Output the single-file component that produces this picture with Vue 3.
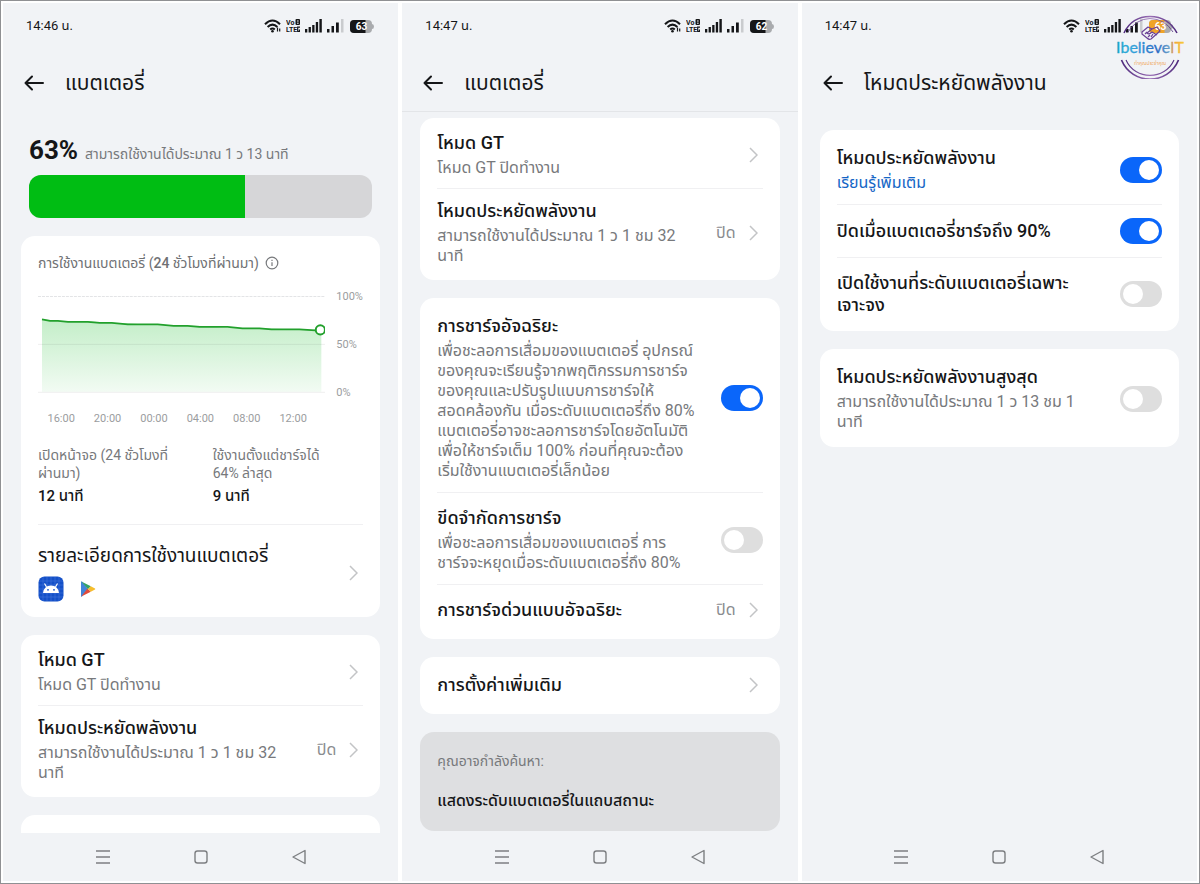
<script setup>
const navItems = ['เมนูล่าสุด', 'หน้าหลัก', 'ย้อนกลับ']

const modeRows = [
  { type: 'link', title: 'โหมด GT', sub: 'โหมด GT ปิดทำงาน' },
  {
    type: 'link',
    title: 'โหมดประหยัดพลังงาน',
    sub: 'สามารถใช้งานได้ประมาณ 1 ว 1 ชม 32\nนาที',
    value: 'ปิด'
  }
]

const phones = [
  {
    id: 'usage',
    time: '14:46 น.',
    level: 63,
    title: 'แบตเตอรี่',
    usage: true,
    cards: [modeRows],
    peek: true
  },
  {
    id: 'battery',
    time: '14:47 น.',
    level: 62,
    title: 'แบตเตอรี่',
    scrolled: true,
    cards: [
      modeRows,
      [
        {
          type: 'switch',
          on: true,
          title: 'การชาร์จอัจฉริยะ',
          sub: 'เพื่อชะลอการเสื่อมของแบตเตอรี่ อุปกรณ์\nของคุณจะเรียนรู้จากพฤติกรรมการชาร์จ\nของคุณและปรับรูปแบบการชาร์จให้\nสอดคล้องกัน เมื่อระดับแบตเตอรี่ถึง 80%\nแบตเตอรี่อาจชะลอการชาร์จโดยอัตโนมัติ\nเพื่อให้ชาร์จเต็ม 100% ก่อนที่คุณจะต้อง\nเริ่มใช้งานแบตเตอรี่เล็กน้อย'
        },
        {
          type: 'switch',
          on: false,
          title: 'ขีดจำกัดการชาร์จ',
          sub: 'เพื่อชะลอการเสื่อมของแบตเตอรี่ การ\nชาร์จจะหยุดเมื่อระดับแบตเตอรี่ถึง 80%'
        },
        { type: 'link', title: 'การชาร์จด่วนแบบอัจฉริยะ', value: 'ปิด' }
      ],
      [{ type: 'link', title: 'การตั้งค่าเพิ่มเติม' }]
    ],
    suggestion: true
  },
  {
    id: 'saver',
    time: '14:47 น.',
    level: 63,
    saver: true,
    title: 'โหมดประหยัดพลังงาน',
    cards: [
      [
        { type: 'switch', on: true, title: 'โหมดประหยัดพลังงาน', link: 'เรียนรู้เพิ่มเติม' },
        { type: 'switch', on: true, title: 'ปิดเมื่อแบตเตอรี่ชาร์จถึง 90%' },
        { type: 'switch', on: false, tall: true, title: 'เปิดใช้งานที่ระดับแบตเตอรี่เฉพาะ\nเจาะจง' }
      ],
      [
        {
          type: 'switch',
          on: false,
          title: 'โหมดประหยัดพลังงานสูงสุด',
          sub: 'สามารถใช้งานได้ประมาณ 1 ว 13 ชม 1\nนาที'
        }
      ]
    ]
  }
]

const hours = ['16:00', '20:00', '00:00', '04:00', '08:00', '12:00']
const batteryPercent = 63
</script>

<template>
  <main class="board">
    <section v-for="phone in phones" :key="phone.id" class="phone">
      <div class="status">
        <span class="time">{{ phone.time }}</span>
        <div class="signals">
          <svg class="wifi" width="17" height="14" viewBox="0 0 17 14" fill="none" stroke="#151618" stroke-width="2">
            <path d="M1 5.200Q8.500 -2.200 16 5.200" />
            <path d="M3.600 8Q8.500 3.200 13.400 8" />
            <path d="M6.200 10.500Q8.500 8.500 10.800 10.500" />
            <circle cx="8.500" cy="12.300" r="1.300" fill="#151618" stroke="none" />
            <path v-if="!phone.saver" d="M13.500 8.500v4M15.700 9.500v3" stroke-width="1.200" />
          </svg>
          <svg class="volte" width="14" height="14" viewBox="0 0 14 14">
            <text x="0" y="6">Vo</text>
            <text x="0" y="13">LTE</text>
            <rect x="9.500" y="0" width="4.500" height="6" rx="1" fill="#151618" />
            <path d="M11 2H12.700M11 4.200H12.700" stroke="#f1f3f6" stroke-width="1" />
            <path d="M14 8.200h-2.300v4.200h1.800v-2" fill="none" stroke="#151618" stroke-width="1.200" />
          </svg>
          <svg width="17" height="14" viewBox="0 0 17 14" fill="#151618">
            <rect y="10" width="2.300" height="3.500" /><rect x="3.600" y="8" width="2.300" height="5.500" />
            <rect x="7.200" y="6" width="2.300" height="7.500" /><rect x="10.800" y="3" width="2.300" height="10.500" />
            <rect x="14.400" width="2.400" height="13.500" />
          </svg>
          <svg width="17" height="14" viewBox="0 0 17 14" fill="#151618">
            <rect y="10" width="2.500" height="3.500" /><rect x="4.500" y="7" width="2.500" height="6.500" />
            <rect x="9" y="3.500" width="2.800" height="10" /><rect x="14" width="2.500" height="13.500" fill="#c9cbce" />
          </svg>
          <svg class="cell" width="24" height="13" viewBox="0 0 24 13">
            <rect width="22" height="13" rx="4" fill="#a9abae" />
            <path d="M22 4q2 0 2 2.500t-2 2.500z" fill="#a9abae" />
            <path d="M4 0H15.500V13H4Q0 13 0 9V4Q0 0 4 0z" :fill="phone.saver ? '#f0a326' : '#151618'" />
            <text x="11.500" y="10" text-anchor="middle">{{ phone.level }}</text>
          </svg>
        </div>
      </div>

      <svg v-if="phone.saver" class="brand" width="72" height="68" viewBox="0 0 72 68" role="img" aria-label="IbelieveIT">
        <defs>
          <linearGradient id="word" x1="0" x2="1" y1="0" y2="0">
            <stop offset="0" stop-color="#16a3c4" />
            <stop offset="0.200" stop-color="#35a9dc" />
            <stop offset="0.600" stop-color="#2d6cc4" />
            <stop offset="0.780" stop-color="#6aa2c8" />
            <stop offset="0.840" stop-color="#f2a03a" />
            <stop offset="1" stop-color="#f6cf3a" />
          </linearGradient>
          <linearGradient id="ring" x1="0" x2="1" y1="0" y2="0">
            <stop offset="0" stop-color="#4f2a7d" />
            <stop offset="0.500" stop-color="#9a6fb5" />
            <stop offset="1" stop-color="#4f2a7d" />
          </linearGradient>
        </defs>
        <g fill="none" stroke="url(#ring)">
          <path d="M10 22Q18 5.500 36 5.500Q54 5.500 63 22" stroke-width="1.500" />
          <path d="M14 21Q22 8 36 7.500Q51 8 59 21" stroke-width="0.800" />
          <path d="M7.500 49C18 74.500 54 74.500 64.500 49" stroke-width="1.700" />
          <path d="M12 49C21 69.500 51 69.500 60 49" stroke-width="1.100" />
        </g>
        <g fill="none" stroke="#6a3f96" stroke-width="1.200" stroke-linejoin="round">
          <path d="M28 21L34 16L38 18L43 16L46 20L37 28Q35 29 33 27L28 23z" />
          <path d="M38 18L33 22Q35 24 38 21L43 24M34 26L36 24M31 23L33 21M37 26L39 23" />
        </g>
        <text class="word" x="36" y="42" text-anchor="middle" fill="url(#word)">IbelieveIT</text>
        <text class="tagline" x="36" y="54" text-anchor="middle">ทำคุณประจำคุณ</text>
      </svg>

      <header class="topbar" :class="{ scrolled: phone.scrolled }">
        <button class="back" aria-label="กลับ">
          <svg width="20" height="16" viewBox="0 0 20 16" fill="none" stroke="#151618" stroke-width="2" stroke-linecap="round" stroke-linejoin="round">
            <path d="M19 8H1.500M8 1.500L1.500 8L8 14.500" />
          </svg>
        </button>
        <h1>{{ phone.title }}</h1>
      </header>

      <div class="content" :class="phone.id">
        <template v-if="phone.usage">
          <div class="summary">
            <p><strong>{{ batteryPercent }}%</strong><span>สามารถใช้งานได้ประมาณ 1 ว 13 นาที</span></p>
            <div class="meter"><div class="fill" :style="{ width: batteryPercent + '%' }"></div></div>
          </div>

          <div class="card usage-card">
            <h2>
              <span>การใช้งานแบตเตอรี่ (<b>24</b> ชั่วโมงที่ผ่านมา)</span>
              <svg width="14" height="14" viewBox="0 0 14 14" fill="none" stroke="#77797c" stroke-width="1.200">
                <circle cx="7" cy="7" r="5.800" /><path d="M7 6.200V10M7 3.800V5" />
              </svg>
            </h2>
            <div class="chart">
              <svg class="plot" viewBox="0 0 288 100" role="img" aria-label="กราฟระดับแบตเตอรี่">
                <defs>
                  <linearGradient id="area" x1="0" x2="0" y1="0" y2="1">
                    <stop offset="0" stop-color="#c3eec8" />
                    <stop offset="1" stop-color="#f2fbf3" />
                  </linearGradient>
                </defs>
                <path d="M4 25L20 27H50L70 29H90L110 31H130L165 32L190 34H225L245 35L284 36V98H4z" fill="url(#area)" />
                <path d="M0 2.500H288" stroke="#e3e4e6" stroke-dasharray="3 1" />
                <path d="M0 50.500H288M0 98.500H288" stroke="#000" stroke-opacity="0.070" />
                <path d="M4 25.500L12 27H20L30 28H50L62 29H74L90 30.500H120L136 32H150L162 33H190L205 34.500H222L234 35.500H262L278 36.500" fill="none" stroke="#22a02c" stroke-width="1.800" />
                <circle cx="283" cy="36" r="4.600" fill="#fff" stroke="#22a02c" stroke-width="2" />
              </svg>
              <div class="levels"><span>100%</span><span>50%</span><span>0%</span></div>
              <div class="hours"><span v-for="hour in hours" :key="hour">{{ hour }}</span></div>
            </div>
            <dl class="stats">
              <div>
                <dt>เปิดหน้าจอ (24 ชั่วโมงที่<br />ผ่านมา)</dt>
                <dd>12 นาที</dd>
              </div>
              <div>
                <dt>ใช้งานตั้งแต่ชาร์จได้<br />64% ล่าสุด</dt>
                <dd>9 นาที</dd>
              </div>
            </dl>
            <button class="details">
              <span class="text">
                <span class="title plain">รายละเอียดการใช้งานแบตเตอรี่</span>
                <span class="apps">
                  <svg width="26" height="26" viewBox="0 0 26 26">
                    <rect x="0.500" y="0.500" width="25" height="25" rx="6" fill="#1450c8" />
                    <path d="M5 1V25M9 1V25M13 1V25M17 1V25M21 1V25M1 5H25M1 9H25M1 13H25M1 17H25M1 21H25" stroke="#4a7ade" stroke-width="0.500" />
                    <path d="M5 17Q6 9.500 13 9.500T21 17z" fill="#fff" />
                    <path d="M8.500 11L6.500 7.500M17.500 11L19.500 7.500" stroke="#fff" stroke-width="1.200" />
                    <circle cx="10" cy="13.800" r="0.900" fill="#1450c8" /><circle cx="16" cy="13.800" r="0.900" fill="#1450c8" />
                  </svg>
                  <svg width="16" height="16" viewBox="0 0 16 16">
                    <path d="M1 1Q1 0 2 0.600L8 8L2 15.400Q1 16 1 15z" fill="#4285d8" />
                    <path d="M1.300 0.500L10.800 5.300L8 8.300z" fill="#34a266" />
                    <path d="M1.300 15.500L10.800 10.700L7.500 7.500z" fill="#e24a3a" />
                    <path d="M10.800 5.300L15 7.400Q15.600 8 15 8.600L10.800 10.700L8 8z" fill="#f6bd2c" />
                  </svg>
                </span>
              </span>
              <svg class="chevron" width="9" height="16" viewBox="0 0 9 16"><path d="M1 1L8 8L1 15" /></svg>
            </button>
          </div>
        </template>

        <div v-for="(card, c) in phone.cards" :key="c" class="card">
          <template v-for="(row, r) in card" :key="r">
            <button v-if="row.type === 'link'" class="row" :class="{ single: !row.sub }">
              <span class="text">
                <span class="title">{{ row.title }}</span>
                <span v-if="row.sub" class="sub">{{ row.sub }}</span>
              </span>
              <span v-if="row.value" class="value">{{ row.value }}</span>
              <svg class="chevron" width="9" height="16" viewBox="0 0 9 16"><path d="M1 1L8 8L1 15" /></svg>
            </button>
            <div v-else class="row toggle" :class="{ single: !row.sub && !row.link && !row.tall }">
              <span class="text">
                <label class="title" :for="`${phone.id}-${c}-${r}`">{{ row.title }}</label>
                <span v-if="row.sub" class="sub">{{ row.sub }}</span>
                <a v-if="row.link" class="sub more" href="#">{{ row.link }}</a>
              </span>
              <input :id="`${phone.id}-${c}-${r}`" type="checkbox" role="switch" :checked="row.on" />
            </div>
          </template>
        </div>

        <div v-if="phone.peek" class="card peek"></div>
        <div v-if="phone.suggestion" class="card suggestion">
          <p>คุณอาจกำลังค้นหา:</p>
          <a href="#">แสดงระดับแบตเตอรี่ในแถบสถานะ</a>
        </div>
      </div>

      <nav class="navbar">
        <button v-for="(item, n) in navItems" :key="item" :aria-label="item">
          <svg width="16" height="16" viewBox="0 0 16 16" fill="none" stroke="#7d7f82" stroke-width="1.400" stroke-linejoin="round">
            <path v-if="n === 0" d="M1 2H15M1 8H15M1 14H15" />
            <rect v-if="n === 1" x="2" y="2" width="12" height="12" rx="2.500" />
            <path v-if="n === 2" d="M14 1.500V14.500L2 8z" />
          </svg>
        </button>
      </nav>
    </section>
  </main>
</template>

<style>
body {
  background: #fff;
}
</style>

<style scoped>
* {
  box-sizing: border-box;
}
.board {
  display: grid;
  grid-template-columns: repeat(3, minmax(0, 1fr));
  gap: 4px;
  height: 100vh;
  padding: 2px;
  border: 1px solid #8f9093;
  background: #fff;
  font-family: Roboto, "Noto Sans Thai", sans-serif;
  color: #151618;
}
h1, h2, p, dl, dd {
  margin: 0;
  font-weight: 400;
}
button {
  padding: 0;
  border: 0;
  background: none;
  font: inherit;
  color: inherit;
  text-align: left;
}
svg {
  display: block;
  flex: none;
}
a {
  text-decoration: none;
  color: inherit;
}
.phone {
  position: relative;
  display: flex;
  flex-direction: column;
  min-height: 0;
  background: #f1f3f6;
}
.status {
  display: flex;
  flex: none;
  align-items: center;
  justify-content: space-between;
  height: 46px;
  padding: 0 24px 0 23px;
}
.time {
  font-size: 13px;
}
.signals {
  display: flex;
  align-items: center;
  gap: 5px;
}
.volte text {
  font-size: 7px;
  font-weight: 700;
  fill: #151618;
}
.cell {
  margin-left: 1px;
}
.cell text {
  font-size: 10px;
  font-weight: 700;
  fill: #fff;
}
.brand {
  position: absolute;
  top: 8px;
  right: 11px;
}
.word {
  font: 400 16px Lato, sans-serif;
  stroke: url(#word);
  stroke-width: 0.3;
}
.tagline {
  font-size: 5px;
  fill: #f0a860;
}
.topbar {
  display: flex;
  flex: none;
  align-items: center;
  gap: 21px;
  height: 63px;
  padding: 6px 20px 0 21px;
  border-bottom: 1px solid transparent;
}
.topbar.scrolled {
  border-bottom-color: #e3e5e8;
}
h1 {
  font-size: 21px;
  line-height: 32px;
}
.content {
  display: flex;
  flex: 1;
  flex-direction: column;
  gap: 18px;
  min-height: 0;
  padding: 6px 18px 0;
  overflow: hidden;
}
.content.saver {
  padding-top: 18px;
}
.summary {
  flex: none;
  padding: 14px 8px 0;
}
.summary p {
  display: flex;
  align-items: baseline;
  gap: 7px;
  height: 43px;
  line-height: 36px;
  white-space: nowrap;
}
.summary strong {
  font-size: 26px;
}
.summary span {
  font-size: 14px;
  color: #77797c;
}
.meter {
  height: 43px;
  overflow: hidden;
  border-radius: 12px;
  background: #d6d6d8;
}
.fill {
  height: 100%;
  background: #00bd13;
}
.card {
  flex: none;
  padding: 3px 17px;
  border-radius: 14px;
  background: #fff;
}
.row,
.details {
  display: flex;
  align-items: center;
  width: 100%;
  padding: 11px 0 10px;
  border-bottom: 1px solid #f0f0f2;
}
.row:last-child,
.details {
  border-bottom-color: transparent;
}
.row.toggle {
  padding: 14px 0 11px;
}
.row.single {
  min-height: 51px;
  padding: 13px 0;
}
.text {
  display: flex;
  flex: 1;
  flex-direction: column;
  gap: 4px;
  min-width: 0;
}
.title {
  font-size: 18px;
  font-weight: 500;
  line-height: 22px;
  white-space: pre;
}
.title.plain {
  font-size: 19px;
  font-weight: 400;
}
.sub {
  font-size: 16px;
  line-height: 20px;
  color: #77797c;
  white-space: pre;
}
.more {
  color: #1566c6;
}
.value {
  margin-right: 13px;
  font-size: 16px;
  line-height: 20px;
  color: #8a8c8f;
}
.chevron {
  margin-right: 5px;
  fill: none;
  stroke: #c3c4c6;
  stroke-width: 1.5;
}
input {
  display: flex;
  flex: none;
  align-items: center;
  appearance: none;
  width: 42px;
  height: 26px;
  margin: 0;
  padding: 0 3px;
  border-radius: 13px;
  background: #dedede;
}
input::before {
  content: "";
  width: 20px;
  height: 20px;
  border-radius: 50%;
  background: #fff;
}
input:checked {
  justify-content: flex-end;
  background: #0a66fa;
}
.usage-card {
  padding-top: 15px;
}
h2 {
  display: flex;
  align-items: center;
  gap: 6px;
  height: 24px;
  font-size: 14px;
  line-height: 24px;
  color: #6f7174;
  white-space: nowrap;
}
h2 b {
  font-weight: 500;
}
.chart {
  display: grid;
  grid-template-columns: minmax(0, 1fr) 27px;
  column-gap: 11px;
  padding-top: 19px;
  font-size: 11px;
  line-height: 14px;
  color: #9b9da0;
}
.plot {
  width: 100%;
}
.levels {
  display: flex;
  flex-direction: column;
  justify-content: space-between;
  margin: -4px 0 -6px;
}
.hours {
  display: grid;
  grid-template-columns: repeat(6, 1fr);
  margin-right: 9px;
  padding-top: 18px;
  text-align: center;
}
.stats {
  display: grid;
  grid-template-columns: 1fr 1fr;
  gap: 24px;
  padding: 20px 0 14px;
  border-bottom: 1px solid #f0f0f2;
}
dt {
  font-size: 14px;
  line-height: 18px;
  color: #77797c;
  white-space: nowrap;
}
dd {
  font-size: 15px;
  font-weight: 500;
  line-height: 28px;
}
.details {
  padding: 20px 0 11px;
}
.details .text {
  gap: 9px;
}
.apps {
  display: flex;
  align-items: center;
  gap: 16px;
}
.peek {
  height: 64px;
}
.suggestion {
  padding: 17px 17px 18px;
  background: #dedfe1;
}
.suggestion p {
  font-size: 14px;
  line-height: 24px;
  color: #77797c;
}
.suggestion a {
  display: block;
  padding-top: 16px;
  font-size: 16px;
  font-weight: 500;
  line-height: 24px;
}
.navbar {
  display: flex;
  flex: none;
  align-items: center;
  justify-content: center;
  gap: 82px;
  height: 48px;
}
</style>
